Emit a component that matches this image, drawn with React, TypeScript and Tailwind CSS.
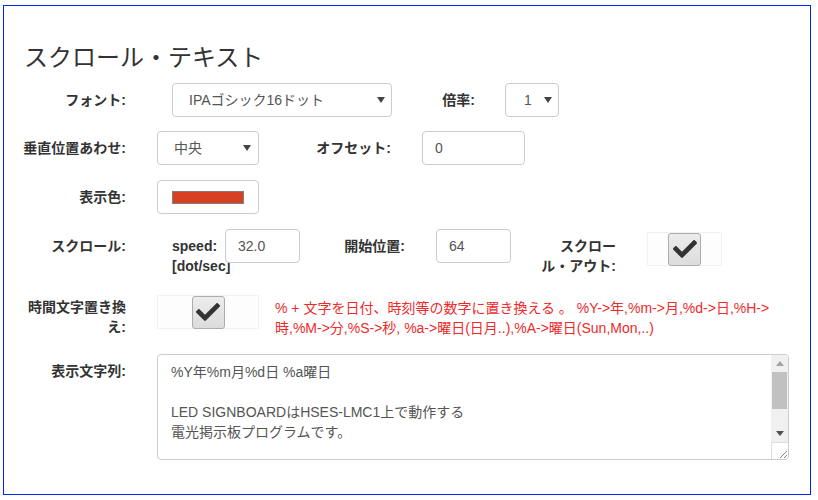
import React from 'react'
import { FaCheck } from 'react-icons/fa'

const font = "font-['Liberation_Sans','Noto_Sans_CJK_JP',sans-serif]"

function Caret() {
  return (
    <svg width="8" height="6" viewBox="0 0 8 6" className="shrink-0">
      <path d="M0 0 L8 0 L4 6 Z" fill="#444" />
    </svg>
  )
}

function Label({ children, className = '' }: { children: React.ReactNode; className?: string }) {
  return (
    <div className={`pt-[7px] text-right text-[14px] leading-[20px] font-bold text-[#333] whitespace-nowrap ${className}`}>
      {children}
    </div>
  )
}

function Select({ value, className = '', pl = 'pl-[16px]', pr = 'pr-[5px]' }: { value: string; className?: string; pl?: string; pr?: string }) {
  return (
    <div className={`h-[34px] flex items-center justify-between border border-[#ccc] rounded-[4px] bg-white text-[14px] text-[#555] ${pl} ${pr} ${className}`}>
      <span>{value}</span>
      <Caret />
    </div>
  )
}

function Input({ value, className = '' }: { value: string; className?: string }) {
  return (
    <div className={`h-[34px] flex items-center px-[12px] border border-[#ccc] rounded-[4px] bg-white text-[14px] text-[#555] ${className}`}>
      {value}
    </div>
  )
}

function CheckBox({ className = '' }: { className?: string }) {
  return (
    <div className={`h-[34px] flex items-center justify-center border border-[#f2f2f2] bg-[#fdfdfd] ${className}`}>
      <div className="w-[33px] h-[33px] flex items-center justify-center rounded-[3px] border border-[#adadad] bg-gradient-to-b from-[#ececec] to-[#dcdcdc]">
        <FaCheck size={24} color="#333" />
      </div>
    </div>
  )
}

export default function App() {
  return (
    <div className={`w-[818px] h-[500px] bg-white pt-[5px] pl-[3px] ${font}`}>
      <div className="w-[808px] h-[490px] border border-[#0022ff]">
        <h3 className="mt-[39px] pl-[20px] text-[24px] leading-[26px] font-normal text-[#333]">スクロール・テキスト</h3>

        {/* フォント */}
        <div className="mt-[12px] flex items-start">
          <Label className="w-[122px]">フォント:</Label>
          <Select value="IPAゴシック16ドット" className="ml-[46px] w-[220px]" pr="pr-[6px]" />
          <Label className="w-[83px]">倍率:</Label>
          <Select value="1" className="ml-[30px] w-[54px]" pl="pl-[18px]" pr="pr-[6px]" />
        </div>

        {/* 垂直位置 */}
        <div className="mt-[14px] flex items-start">
          <Label className="w-[122px]">垂直位置あわせ:</Label>
          <Select value="中央" className="ml-[31px] w-[102px]" pl="pl-[16px]" pr="pr-[7px]" />
          <Label className="w-[132px]">オフセット:</Label>
          <Input value="0" className="ml-[31px] w-[103px]" />
        </div>

        {/* 表示色 */}
        <div className="mt-[15px] flex items-start">
          <Label className="w-[122px]">表示色:</Label>
          <div className="ml-[31px] w-[102px] h-[34px] flex items-center pl-[14px] border border-[#ccc] rounded-[4px] bg-white">
            <div className="w-[72px] h-[13px] border border-[#808080] bg-[#d84022]" />
          </div>
        </div>

        {/* スクロール */}
        <div className="mt-[15px] flex items-start">
          <Label className="w-[122px]">スクロール:</Label>
          <div className="ml-[46px] w-[53px] pt-[7px] text-[14px] leading-[20px] font-bold text-[#333] whitespace-nowrap">
            <div>speed:</div>
            <div>[dot/sec]</div>
          </div>
          <Input value="32.0" className="w-[75px]" />
          <Label className="w-[105px]">開始位置:</Label>
          <Input value="64" className="ml-[31px] w-[75px]" />
          <Label className="w-[105px]">
            <div>スクロー</div>
            <div>ル・アウト:</div>
          </Label>
          <CheckBox className="ml-[31px] w-[75px] mt-[3px]" />
        </div>

        {/* 時間文字置き換え */}
        <div className="mt-[14px] flex items-start">
          <Label className="w-[122px]">
            <div>時間文字置き換</div>
            <div>え:</div>
          </Label>
          <CheckBox className="ml-[31px] w-[102px] mt-[5px]" />
          <div className="ml-[16px] pt-[8px] text-[14px] leading-[20px] text-[#ee2a2a] whitespace-pre">
            <div>% + 文字を日付、時刻等の数字に置き換える 。 %Y-&gt;年,%m-&gt;月,%d-&gt;日,%H-&gt;</div>
            <div>時,%M-&gt;分,%S-&gt;秒, %a-&gt;曜日(日月..),%A-&gt;曜日(Sun,Mon,..)</div>
          </div>
        </div>

        {/* 表示文字列 */}
        <div className="mt-[16px] flex items-start">
          <Label className="w-[122px]">表示文字列:</Label>
          <div className="ml-[31px] w-[632px] h-[106px] flex border border-[#ccc] rounded-[4px] bg-white overflow-hidden">
            <div className="flex-1 px-[13px] py-[7px] text-[14px] leading-[20px] text-[#555]">
              <div>%Y年%m月%d日 %a曜日</div>
              <div>&nbsp;</div>
              <div>LED SIGNBOARDはHSES-LMC1上で動作する</div>
              <div>電光掲示板プログラムです。</div>
            </div>
            <div className="w-[17px] flex flex-col">
              <div className="flex-1 flex flex-col bg-[#f0f0f0]">
                <div className="h-[17px] flex items-center justify-center">
                  <svg width="8" height="5" viewBox="0 0 8 5">
                    <path d="M0 5 L8 5 L4 0 Z" fill="#a3a3a3" />
                  </svg>
                </div>
                <div className="flex-1">
                  <div className="mx-[1px] h-[37px] bg-[#c1c1c1]" />
                </div>
                <div className="h-[17px] flex items-center justify-center">
                  <svg width="8" height="5" viewBox="0 0 8 5">
                    <path d="M0 0 L8 0 L4 5 Z" fill="#505050" />
                  </svg>
                </div>
              </div>
              <div className="h-[17px] border-t border-l border-[#dcdcdc] bg-white flex items-end justify-end">
                <svg width="10" height="10" viewBox="0 0 10 10">
                  <path d="M9 2 L2 9 M9 6 L6 9" stroke="#888" strokeWidth="1" />
                </svg>
              </div>
            </div>
          </div>
        </div>
      </div>
    </div>
  )
}
